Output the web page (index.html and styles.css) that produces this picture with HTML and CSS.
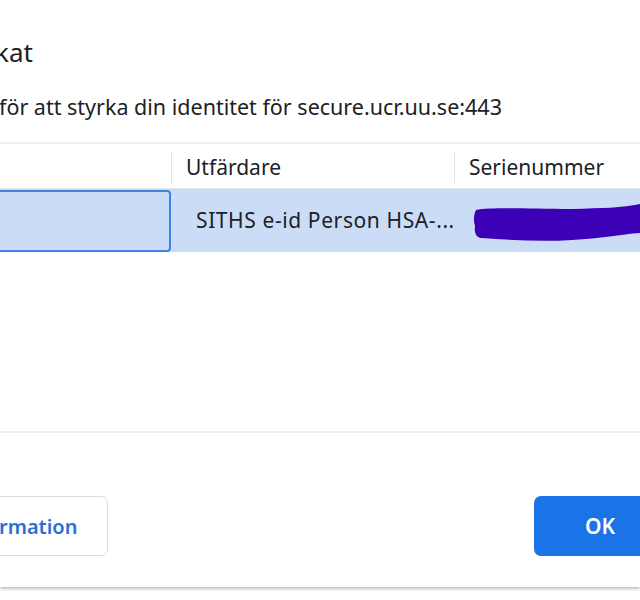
FILE: index.html
```html
<!DOCTYPE html>
<html lang="sv">
<head>
<meta charset="utf-8">
<title>Välj ett certifikat</title>
<link rel="stylesheet" href="styles.css">
</head>
<body>
<div class="dialog">
  <h1 class="title">kat</h1>
  <p class="subtitle">för att styrka din identitet för secure.ucr.uu.se:443</p>
  <div class="table">
    <div class="thead">
      <div class="th c1"></div>
      <div class="th c2"><span class="sep"></span><span class="label">Utfärdare</span></div>
      <div class="th c3"><span class="sep"></span><span class="label">Serienummer</span></div>
    </div>
    <div class="row">
      <div class="td c1 focus"></div>
      <div class="td c2"><span class="cell">SITHS e-id Person HSA-...</span></div>
      <div class="td c3">
        <svg class="scribble" width="170" height="40" viewBox="0 0 170 40">
          <path d="M4 6 C20 3 60 5 100 5 C130 4 150 4 168 0 L170 29 C150 30 130 35 100 36 C70 38 40 36 10 34 C4 34 2 28 3 22 C1 16 2 10 4 6 Z" fill="#3c00b6"/>
        </svg>
      </div>
    </div>
    <div class="empty"></div>
  </div>
  <div class="actions">
    <button class="btn secondary">rmation</button>
    <button class="btn primary">OK</button>
  </div>
</div>
</body>
</html>
```

FILE: styles.css
```css
html, body {
  margin: 0;
  padding: 0;
  background: #ffffff;
}
body {
  width: 640px;
  height: 600px;
  overflow: hidden;
  font-family: "Noto Sans", "Open Sans", "Liberation Sans", sans-serif;
  color: #202124;
}
.dialog {
  width: 640px;
  height: 587px;
  background: #ffffff;
  box-shadow: 0 2px 3px rgba(0,0,0,0.25);
  display: flex;
  flex-direction: column;
}
.title {
  margin: 34px 0 0 -5px;
  height: 36px;
  font-size: 26px;
  font-weight: 400;
  line-height: 36px;
  white-space: nowrap;
}
.subtitle {
  margin: 23px 0 0 -1px;
  height: 28px;
  font-size: 21.5px;
  line-height: 28px;
  white-space: nowrap;
}
.table {
  margin-top: 21px;
  border-top: 2px solid #eeeeee;
  display: flex;
  flex-direction: column;
}
.thead, .row {
  display: flex;
}
.thead {
  height: 44px;
  border-bottom: 1px solid #e6e6e6;
}
.c1 { width: 171px; flex: none; }
.c2 { width: 283px; flex: none; }
.c3 { flex: 1; }
.th {
  display: flex;
  align-items: center;
  font-size: 21px;
  overflow: hidden;
  white-space: nowrap;
}
.sep {
  width: 2px;
  height: 31px;
  background: #e3e3e3;
  margin-left: -1px;
  margin-top: 3px;
}
.label {
  padding-left: 14px;
  padding-top: 2px;
}
.row {
  height: 63px;
  background: #cadcf6;
}
.td {
  display: flex;
  align-items: center;
  font-size: 21px;
  white-space: nowrap;
}
.focus {
  box-sizing: border-box;
  margin-left: -10px;
  width: 181px;
  height: 62px;
  margin-top: 1px;
  border: 2px solid #3d82e4;
  border-radius: 4px;
}
.cell {
  padding-left: 25px;
  padding-bottom: 2px;
  letter-spacing: 0.6px;
}
.scribble {
  margin-left: 18px;
  margin-top: 6px;
}
.empty {
  height: 179px;
  border-bottom: 2px solid #eeeeee;
}
.actions {
  display: flex;
  justify-content: space-between;
  align-items: center;
  margin-top: 63px;
}
.btn {
  height: 60px;
  font-family: inherit;
  font-size: 20px;
  font-weight: 600;
  border-radius: 7px;
  white-space: nowrap;
}
.secondary {
  background: #ffffff;
  border: 1.5px solid #dcdcdc;
  color: #2a6fd6;
  margin-left: -22px;
  padding: 0 30px 0 20px;
}
.primary {
  background: #1b73e8;
  border: none;
  color: #ffffff;
  font-size: 21px;
  width: 132px;
  margin-right: -26px;
}
```
